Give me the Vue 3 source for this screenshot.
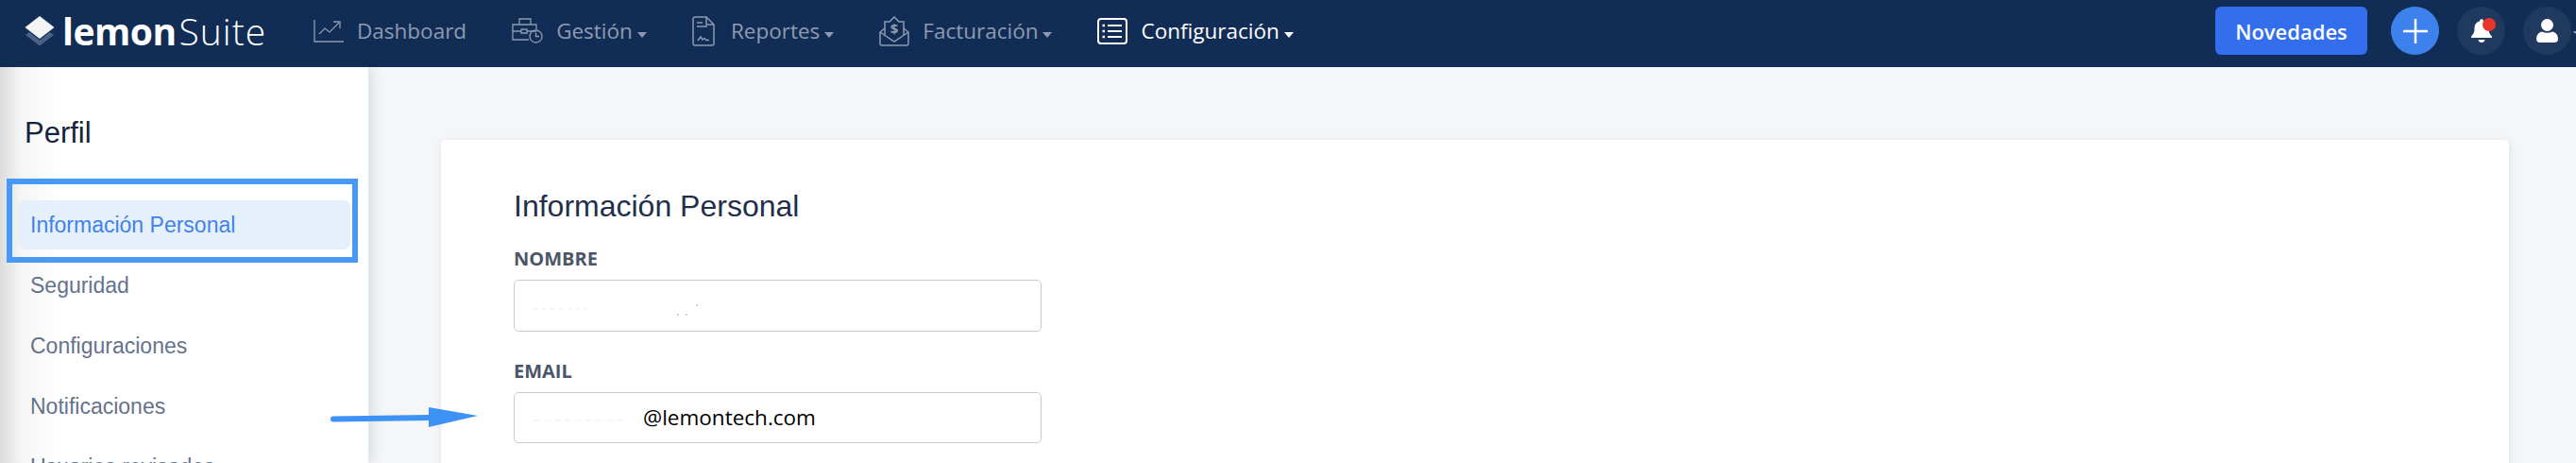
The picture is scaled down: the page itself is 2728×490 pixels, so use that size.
<template>
  <div class="page">
    <header class="topbar">
      <div class="logo">
        <svg width="32" height="32" viewBox="0 0 32 32">
          <path d="M1 20l4-3 11 8.500L27 17l4 3-15 11.500z" fill="#4a6285" />
          <path d="M16 0l15.500 12L16 24 .5 12z" fill="#f4f4f4" />
        </svg>
        <span class="logo-text"><b>lemon</b><i>Suite</i></span>
      </div>

      <nav class="nav">
        <a class="nav-item">
          <svg width="32" height="24" viewBox="0 0 32 24" fill="none" stroke="currentColor" stroke-width="1.300">
            <path d="M1 0v23h31" />
            <path d="M6 15l6-6 5 4 10-10" />
            <path d="M21 2h7v7" />
          </svg>
          <span>Dashboard</span>
        </a>
        <a class="nav-item has-caret">
          <svg width="33" height="27" viewBox="0 0 33 27" fill="none" stroke="currentColor" stroke-width="1.300">
            <path d="M8 7V1h12v6" />
            <path d="M26 12V7H1v16h17" />
            <path d="M1 14h9M16 14h10M10 12h6v4h-6z" />
            <circle cx="25.500" cy="19.500" r="6.500" />
            <path d="M25.500 15.500v4h3.500" />
          </svg>
          <span>Gestión</span>
        </a>
        <a class="nav-item has-caret wide-gap">
          <svg width="24" height="32" viewBox="0 0 24 32" fill="none" stroke="currentColor" stroke-width="1.500">
            <path d="M3 1h12l8 8v20q0 2-2 2H3q-2 0-2-2V3q0-2 2-2z" />
            <path d="M15 1v8h8" />
            <path d="M5 7h6M5 11h11" />
            <path d="M6 26l3-4 2 3 2-1.500 2 2h3" />
          </svg>
          <span>Reportes</span>
        </a>
        <a class="nav-item has-caret">
          <svg width="32" height="32" viewBox="0 0 32 32" fill="none" stroke="currentColor" stroke-width="1.500">
            <path d="M6 13l-5 4v12q0 2 2 2h26q2 0 2-2V17l-5-4" />
            <path d="M1 17l15 10 15-10" />
            <path d="M6 20V6h5l5-5 5 5h5v14" />
            <text x="16" y="19" text-anchor="middle" class="dollar">$</text>
          </svg>
          <span>Facturación</span>
        </a>
        <a class="nav-item has-caret active">
          <svg width="32" height="28" viewBox="0 0 32 28" fill="none" stroke="currentColor" stroke-width="2">
            <rect x="1" y="1" width="30" height="26" rx="3" />
            <path d="M11 8h15M11 14h15M11 20h15" />
            <path d="M5.500 8h2.500M5.500 14h2.500M5.500 20h2.500" stroke-width="2.600" />
          </svg>
          <span>Configuración</span>
        </a>
      </nav>

      <div class="actions">
        <button class="news">Novedades</button>
        <div class="circle plus">
          <svg width="26" height="26" viewBox="0 0 26 26"><path d="M13 0v26M0 13h26" stroke="#fff" stroke-width="2.500" /></svg>
        </div>
        <div class="circle">
          <svg width="22" height="25" viewBox="0 0 22 25">
            <path d="M11 0q2 0 2 2.500c4 1 5.500 4 5.500 7.500 0 4.500 1.500 6.500 3.500 8.500V20H0v-1.500c2-2 3.500-4 3.500-8.500 0-3.500 1.500-6.500 5.500-7.500Q9 0 11 0z" fill="#fff" />
            <path d="M7.500 22h7q-.5 3-3.500 3t-3.500-3z" fill="#fff" />
          </svg>
          <span class="dot"></span>
        </div>
        <div class="circle user">
          <svg width="23" height="25" viewBox="0 0 23 25" fill="#fff">
            <circle cx="11.500" cy="6.500" r="6.500" />
            <path d="M0 21q0-6 6-7.500 5.500 2.500 11 0 6 1.500 6 7.500 0 4-4 4H4q-4 0-4-4z" />
          </svg>
        </div>
      </div>
    </header>

    <div class="body">
      <aside class="sidebar">
        <h2>Perfil</h2>
        <ul>
          <li v-for="(item, i) in menu" :key="item" :class="{ selected: i === 0 }">{{ item }}</li>
        </ul>
        <div class="mark"></div>
      </aside>

      <main class="main">
        <section class="card">
          <h1>Información Personal</h1>
          <label>NOMBRE</label>
          <div class="field">
            <svg class="specks" width="200" height="20" viewBox="0 0 200 20">
              <path d="M20 12h58" stroke="#eee" stroke-width="1" stroke-dasharray="5 4" />
              <path d="M192 8h2M172 18h2M181 18h2" stroke="#aaa" stroke-width="1" />
            </svg>
          </div>
          <label>EMAIL</label>
          <div class="field email">
            <svg class="specks" width="130" height="20" viewBox="0 0 130 20">
              <path d="M20 11h100" stroke="#eee" stroke-width="1" stroke-dasharray="7 4" />
            </svg>
            @lemontech.com
          </div>
        </section>
      </main>

      <svg class="arrow" width="160" height="26" viewBox="0 0 160 26">
        <path d="M4 14.500L105 13" stroke="#3f92f5" stroke-width="6" stroke-linecap="round" />
        <path d="M105 2l52 9-52 12z" fill="#3f92f5" />
      </svg>
    </div>
  </div>
</template>

<script setup>
const menu = ['Información Personal', 'Seguridad', 'Configuraciones', 'Notificaciones', 'Usuarios revisados']
</script>

<style>
html, body { margin: 0; background: #f4f6f8; overflow: hidden; }
</style>

<style scoped>
* { box-sizing: border-box; }
.page { width: 2728px; height: 490px; overflow: hidden; font-family: "Open Sans", sans-serif; }

.topbar { height: 71px; background: #122d55; display: flex; align-items: center; padding: 0 5px 6px 26px; }
.logo { width: 306px; flex: none; display: flex; align-items: center; gap: 8px; color: #fff; }
.logo svg { flex: none; }
.logo-text { font-size: 39px; line-height: 39px; letter-spacing: -0.5px; white-space: nowrap; }
.logo-text b { font-weight: 700; }
.logo-text i { font-style: normal; font-weight: 300; margin-left: 3px; letter-spacing: 1px; }

.nav { display: flex; align-items: center; gap: 48px; }
.nav-item { display: flex; align-items: center; gap: 14px; color: #8e9bb0; font-size: 22.5px; white-space: nowrap; }
.nav-item.wide-gap { gap: 17px; }
.nav-item.active { color: #fff; }
.has-caret span::after { content: ""; display: inline-block; margin-left: 5px; vertical-align: 1px; border-top: 6px solid currentColor; border-left: 5.500px solid transparent; border-right: 5.500px solid transparent; }
.dollar { font-size: 15px; font-weight: 700; fill: currentColor; stroke: none; }

.actions { margin-left: auto; display: flex; align-items: center; gap: 19px; }
.news { width: 161px; height: 51px; border: none; border-radius: 6px; background: #336eee; color: #fff; font: 600 22px "Open Sans", sans-serif; margin-right: 6px; }
.circle { position: relative; width: 51px; height: 51px; border-radius: 50%; background: #20395f; display: flex; align-items: center; justify-content: center; }
.circle.plus { background: #3d82ec; }
.circle.user::after { content: ""; position: absolute; left: 53px; top: 26px; border-top: 3px solid #8e9bb0; border-left: 2px solid transparent; border-right: 2px solid transparent; }
.dot { position: absolute; top: 12px; left: 27px; width: 14px; height: 14px; border-radius: 50%; background: #e8342a; }

.body { position: relative; display: flex; height: 419px; }
.sidebar { position: relative; z-index: 1; width: 390px; flex: none; padding: 0 19px; background: linear-gradient(90deg, #dcdcdc 0, #f5f5f5 22px, #fff 62px); box-shadow: 4px 0 12px rgba(60, 70, 90, 0.14); }
.sidebar h2 { margin: 0; padding: 49px 7px 0; height: 141px; font: 400 31px/42px "Liberation Sans", sans-serif; color: #14233d; }
.sidebar ul { list-style: none; margin: 0; padding: 0; display: flex; flex-direction: column; gap: 12px; }
.sidebar li { height: 52px; padding-left: 13px; border-radius: 7px; font: 400 23px/52px "Liberation Sans", sans-serif; color: #64738c; }
.sidebar li.selected { background: #e6f0fb; color: #3f82ec; }
.mark { position: absolute; left: 7px; top: 118px; width: 372px; height: 89px; border: 6px solid #4898f7; }

.main { flex: 1; padding: 77px 71px 0 77px; }
.card { height: 400px; padding: 50px 77px; background: #fff; border-radius: 5px; box-shadow: 1px 2px 8px rgba(60, 70, 90, 0.12); }
.card h1 { margin: 0 0 24px; font: 400 32px/40px "Liberation Sans", sans-serif; color: #1f2f4b; }
.card label { display: block; font-size: 20px; font-weight: 700; line-height: 24px; color: #4b5568; margin-bottom: 10px; }
.field { position: relative; width: 559px; height: 55px; border: 1.500px solid #cbcbcb; border-radius: 5px; margin-bottom: 30px; }
.field.email { padding-left: 136px; font-size: 22.5px; line-height: 52px; color: #000; margin-bottom: 0; height: 54px; }
.specks { position: absolute; left: 0; top: 18px; }

.arrow { position: absolute; z-index: 2; left: 349px; top: 358px; }
</style>
